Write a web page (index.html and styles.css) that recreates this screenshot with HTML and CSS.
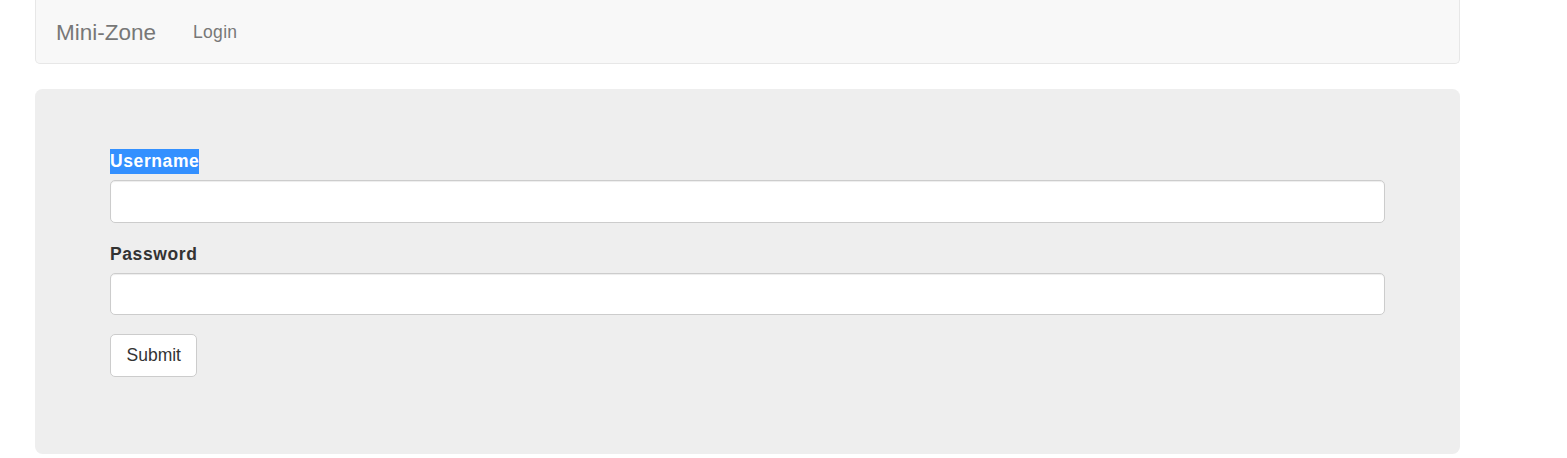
FILE: index.html
```html
<!DOCTYPE html>
<html>
<head>
<meta charset="utf-8">
<title>Mini-Zone</title>
<link rel="stylesheet" href="styles.css">
</head>
<body>
<div class="page">
  <nav class="navbar">
    <a class="brand" href="#">Mini-Zone</a>
    <a class="nav-link" href="#">Login</a>
  </nav>
  <div class="jumbotron">
    <form class="login-form">
      <div class="form-group">
        <label class="form-label"><span class="selected">Username</span></label>
        <input class="form-control" type="text">
      </div>
      <div class="form-group">
        <label class="form-label">Password</label>
        <input class="form-control" type="password">
      </div>
      <button class="btn" type="button">Submit</button>
    </form>
  </div>
</div>
</body>
</html>
```
FILE: styles.css
```css
* { box-sizing: border-box; }
html, body { margin: 0; padding: 0; background: #fff; }
body {
  font-family: "Liberation Sans", Arial, sans-serif;
  font-size: 17.5px;
  line-height: 25px;
  color: #333;
}
.page {
  width: 1425px;
  margin-left: 35px;
}
.navbar {
  height: 65px;
  background: #f8f8f8;
  border: 1px solid #e7e7e7;
  border-top-color: #f0f0f0;
  border-radius: 0 0 5px 5px;
  display: flex;
  align-items: center;
  padding: 0 0 0 20px;
  margin-top: -1px;
  margin-bottom: 25px;
}
.brand {
  font-size: 22.5px;
  color: #777;
  text-decoration: none;
  line-height: 25px;
  margin-top: 1px;
}
.nav-link {
  font-size: 17.5px;
  color: #777;
  text-decoration: none;
  margin-left: 37px;
  margin-top: 1px;
  letter-spacing: 0.3px;
}
.jumbotron {
  background: #eee;
  border-radius: 7.5px;
  padding: 60px 75px 77px 75px;
}
.form-group { margin-bottom: 18.75px; }
.form-label {
  display: block;
  font-weight: bold;
  line-height: 25px;
  margin-bottom: 6.25px;
  letter-spacing: 0.6px;
}
.selected {
  background: #3390ff;
  color: #fff;
  display: inline-block;
}
.form-control {
  display: block;
  width: 100%;
  height: 42.5px;
  background: #fff;
  border: 1px solid #ccc;
  border-radius: 5px;
  box-shadow: inset 0 1px 1px rgba(0,0,0,.075);
  padding: 7.5px 15px;
  font: inherit;
  margin: 0;
}
.btn {
  display: block;
  height: 42.5px;
  background: #fff;
  border: 1px solid #ccc;
  border-radius: 5px;
  padding: 0 15px 0 15.5px;
  font-family: "Liberation Sans", Arial, sans-serif;
  font-size: 17.5px;
  color: #333;
  cursor: pointer;
}
```
